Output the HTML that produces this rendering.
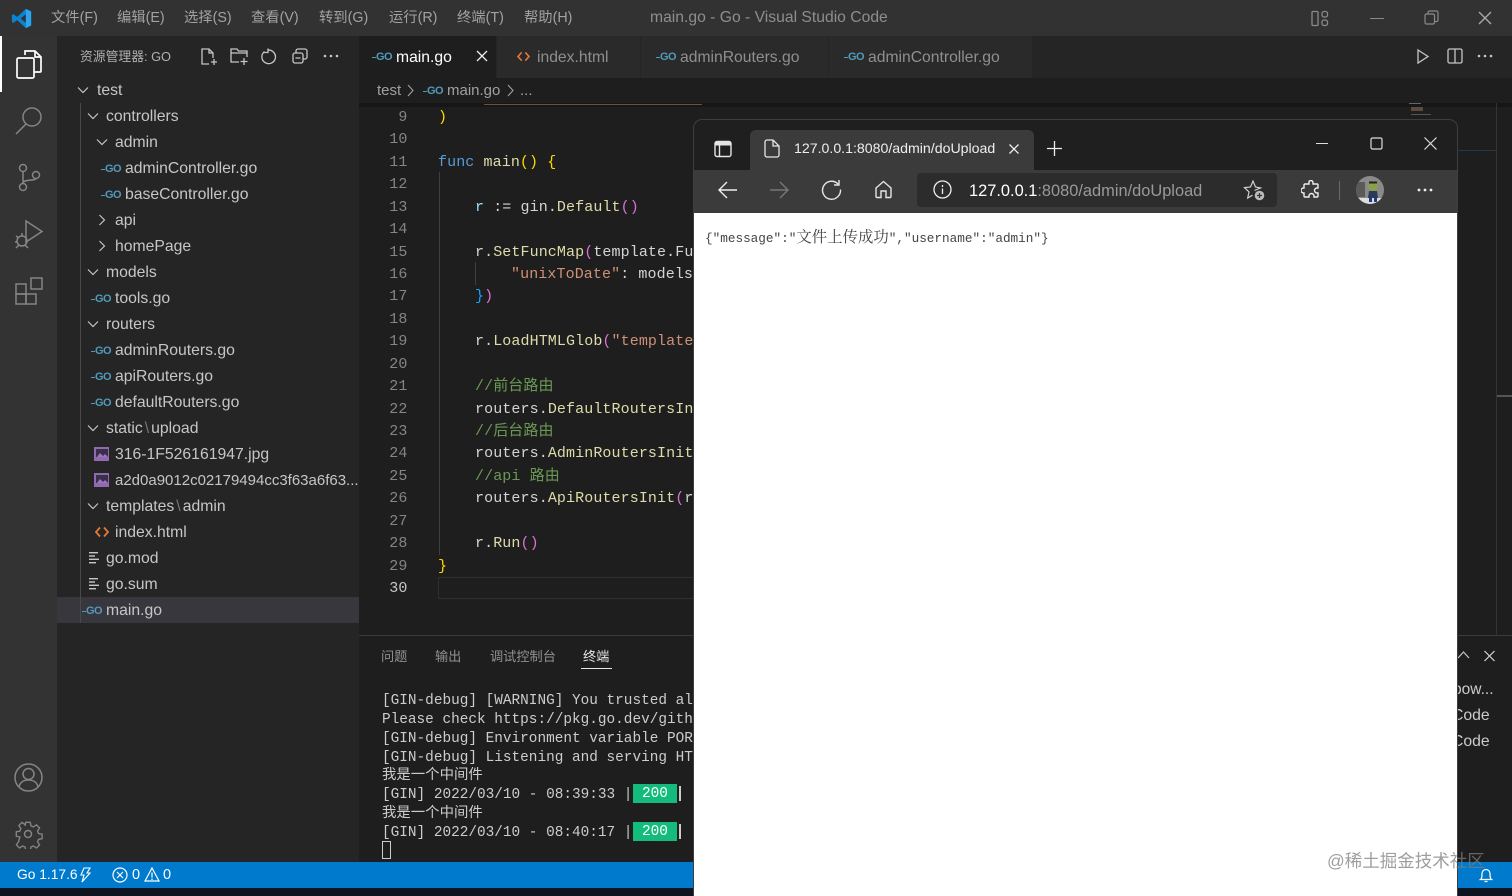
<!DOCTYPE html>
<html lang="zh"><head><meta charset="utf-8"><title>main.go - Go - Visual Studio Code</title>
<style>
html,body{margin:0;padding:0;width:1512px;height:896px;overflow:hidden;background:#1e1e1e}
body{font-family:"Liberation Sans","Noto Sans CJK SC",sans-serif;position:relative}
div,svg,span.a{position:absolute}
.t{position:absolute;white-space:nowrap;line-height:20px}
.m{color:#a2a2a2;font-size:14.3px;top:8px}
.f{color:#c6c6c6;font-size:15.75px;margin-top:1px}
.tab{color:#8f8f8f;font-size:15.7px;top:48px}
.c{position:absolute;margin-top:2px;white-space:nowrap;font:15px/22px "Liberation Mono","Noto Sans CJK SC",monospace;letter-spacing:.1px;color:#d4d4d4}
.n{position:absolute;margin-top:2px;left:370px;width:37.5px;text-align:right;font:15px/22px "Liberation Mono",monospace;color:#858585;letter-spacing:.1px}
.k{color:#569cd6}.y{color:#dcdcaa}.g{color:#ffd700}.v{color:#9cdcfe}.s{color:#ce9178}.z{color:#6a9955}.p{color:#da70d6}.b{color:#179fff}
.term{position:absolute;margin-top:2px;left:382px;white-space:nowrap;font:14.4px/19px "Liberation Mono","Noto Sans CJK SC",monospace;color:#ccc}
.go{position:absolute;font:bold 11px/12px "Liberation Sans",sans-serif;color:#519aba;letter-spacing:-.5px;white-space:nowrap}
.go:before{content:"";position:absolute;left:-4px;top:6px;width:4px;height:1px;background:#519aba}
.chev{fill:none;stroke:#c5c5c5;stroke-width:1.2}
.ic{fill:none;stroke:#c5c5c5;stroke-width:1.3}
.ab{fill:none;stroke:#858585;stroke-width:1.5}
</style></head><body>

<!-- backgrounds -->
<div style="left:0;top:0;width:1512px;height:36px;background:#323233"></div>
<div style="left:0;top:36px;width:57px;height:826px;background:#333"></div>
<div style="left:57px;top:36px;width:302px;height:826px;background:#252526"></div>
<div style="left:359px;top:36px;width:1153px;height:42px;background:#252526"></div>
<div style="left:359px;top:36px;width:137px;height:42px;background:#1e1e1e"></div>
<div style="left:497px;top:36px;width:143px;height:42px;background:#2a2a2a"></div>
<div style="left:641px;top:36px;width:187px;height:42px;background:#2a2a2a"></div>
<div style="left:829px;top:36px;width:203px;height:42px;background:#2a2a2a"></div>
<div style="left:359px;top:78px;width:1153px;height:25px;background:#1e1e1e"></div>
<div style="left:359px;top:103px;width:1153px;height:4px;background:#161616"></div>
<div style="left:484px;top:104px;width:218px;height:1px;background:#6b5140"></div>
<div style="left:359px;top:635px;width:1153px;height:1px;background:#3a3a3a"></div>
<div style="left:0;top:862px;width:1512px;height:26px;background:#007acc"></div>
<div style="left:0;top:888px;width:1512px;height:8px;background:#0e1420"></div>

<!-- title bar -->
<svg style="left:11px;top:8px" width="21" height="21" viewBox="0 0 24 24"><path fill="#0a84d0" d="M17 1l6 3v16l-6 3-10-9.2L2.700 17 1 16V8l1.700-1L7 10.200zM17 7l-6 5 6 5z"/><path fill="#2aa6f0" d="M17 1l6 3v16l-6 3z"/></svg>
<span class="t m" style="left:51px">文件(F)</span>
<span class="t m" style="left:117px">编辑(E)</span>
<span class="t m" style="left:184px">选择(S)</span>
<span class="t m" style="left:251px">查看(V)</span>
<span class="t m" style="left:319px">转到(G)</span>
<span class="t m" style="left:389px">运行(R)</span>
<span class="t m" style="left:457px">终端(T)</span>
<span class="t m" style="left:524px">帮助(H)</span>
<span class="t" style="left:650px;top:8px;font-size:15.7px;color:#8e8e8e">main.go - Go - Visual Studio Code</span>
<svg style="left:1311px;top:10px" width="18" height="17" class="ic" viewBox="0 0 18 17"><rect x="1" y="1.500" width="6" height="14" rx="1" stroke="#8a8a8a"/><rect x="11" y="1.500" width="5.500" height="5.500" rx="2" stroke="#8a8a8a"/><rect x="11" y="10" width="5.500" height="5.500" rx="2" stroke="#8a8a8a"/></svg>
<div style="left:1370px;top:18px;width:14px;height:1px;background:#8a8a8a"></div>
<svg style="left:1424px;top:10px" width="15" height="15" viewBox="0 0 15 15" fill="none" stroke="#8a8a8a" stroke-width="1.200"><rect x="1" y="4" width="9.500" height="10" rx="1.500"/><path d="M4 4V2.500A1.500 1.500 0 0 1 5.500 1H12.500A1.500 1.500 0 0 1 14 2.500V10A1.500 1.500 0 0 1 12.500 11.500H10.500"/></svg>
<svg style="left:1478px;top:11px" width="14" height="14" viewBox="0 0 14 14" stroke="#a8a8a8" stroke-width="1.400"><path d="M1 1l12 12M13 1L1 13"/></svg>

<!-- activity bar -->
<div style="left:0;top:36px;width:2px;height:56px;background:#fff"></div>
<svg style="left:15px;top:49px" width="27" height="30" viewBox="0 0 27 30" fill="none" stroke="#fff" stroke-width="1.700"><path d="M10 6V2h10l6 6v14a1 1 0 0 1-1 1h-6"/><path d="M20 2v6h6"/><rect x="2" y="9" width="17" height="20" rx="1.500"/></svg>
<svg style="left:15px;top:106px" width="28" height="29" class="ab" viewBox="0 0 28 29"><circle cx="17" cy="11" r="9"/><path d="M11 18L1 28"/></svg>
<svg style="left:17px;top:163px" width="24" height="29" class="ab" viewBox="0 0 24 29"><circle cx="6" cy="5" r="3.500"/><circle cx="6" cy="24" r="3.500"/><circle cx="19" cy="12" r="3.500"/><path d="M6 8.500v12M6 20c0-4 13-2 13-4.500"/></svg>
<svg style="left:14px;top:218px" width="30" height="31" class="ab" viewBox="0 0 30 31"><path d="M12 3l16 10.500L12 24z"/><circle cx="8" cy="23" r="5"/><path d="M2 18l3 2M1 24h2M2 30l3-3M14 30l-3-3M8 18v-3"/></svg>
<svg style="left:14px;top:276px" width="30" height="30" class="ab" viewBox="0 0 30 30"><rect x="2" y="8" width="10" height="10"/><rect x="2" y="18" width="10" height="10"/><rect x="12" y="18" width="10" height="10"/><rect x="17" y="2" width="11" height="11"/></svg>
<svg style="left:14px;top:763px" width="29" height="29" class="ab" viewBox="0 0 29 29"><circle cx="14.500" cy="14.500" r="13.500"/><circle cx="14.500" cy="11" r="5.500"/><path d="M5 24c1-5 5-7 9.500-7s8.500 2 9.500 7"/></svg>
<svg style="left:13px;top:819px" width="30" height="30" class="ab" viewBox="0 0 30 30"><circle cx="15" cy="15" r="3.500"/><path d="M12.500 2h5l.8 4 2.700 1.100 3.400-2.300 3.500 3.500-2.300 3.400 1.100 2.800 4 .7v5l-4 .8-1.100 2.700 2.300 3.400-3.500 3.500-3.400-2.300-2.700 1.100-.8 4h-5l-.8-4-2.700-1.100-3.400 2.300-3.500-3.500 2.300-3.400L6 18.300l-4-.8v-5l4-.7 1.100-2.800-2.300-3.400 3.500-3.500 3.400 2.300L11.700 6z" transform="translate(1.500 1.500) scale(.9)"/></svg>

<!-- sidebar header -->
<span class="t" style="left:80px;top:47px;font-size:12.800px;color:#b0b0b0">资源管理器: GO</span>
<svg style="left:200px;top:48px" width="18" height="18" class="ic" viewBox="0 0 18 18"><path d="M9 16H2V1h7l4 4v5M9 1v4h4M14 11v6M11 14h6"/></svg>
<svg style="left:230px;top:47px" width="19" height="19" class="ic" viewBox="0 0 19 19"><path d="M9 15H1V2h6l1.500 2H17v6M1 6h16M14 11v7M10.500 14.500h7"/></svg>
<svg style="left:261px;top:48px" width="17" height="17" class="ic" viewBox="0 0 17 17"><path d="M3.500 3.500a6.800 6.800 0 1 0 3.500-1.400M7 .5v4H3"/></svg>
<svg style="left:292px;top:48px" width="16" height="16" class="ic" viewBox="0 0 16 16"><rect x="1" y="5" width="10" height="10" rx="2"/><path d="M4 5V3a2 2 0 0 1 2-2h7a2 2 0 0 1 2 2v6a2 2 0 0 1-2 2h-2M3.500 10h5"/></svg>
<svg style="left:323px;top:54px" width="16" height="4" viewBox="0 0 16 4" fill="#c5c5c5"><circle cx="2" cy="2" r="1.300"/><circle cx="8" cy="2" r="1.300"/><circle cx="14" cy="2" r="1.300"/></svg>

<!-- tree -->
<div style="left:57px;top:597px;width:302px;height:26px;background:#37373d"></div>
<div style="left:80px;top:103px;width:1px;height:520px;background:#4a4a4a"></div>
<svg style="left:76px;top:83px" width="14" height="14" class="chev" viewBox="0 0 14 14"><path d="M2 4.500l5 5 5-5"/></svg>
<svg style="left:86px;top:109px" width="14" height="14" class="chev" viewBox="0 0 14 14"><path d="M2 4.500l5 5 5-5"/></svg>
<svg style="left:95px;top:135px" width="14" height="14" class="chev" viewBox="0 0 14 14"><path d="M2 4.500l5 5 5-5"/></svg>
<svg style="left:95px;top:213px" width="14" height="14" class="chev" viewBox="0 0 14 14"><path d="M4.500 2l5 5-5 5"/></svg>
<svg style="left:95px;top:239px" width="14" height="14" class="chev" viewBox="0 0 14 14"><path d="M4.500 2l5 5-5 5"/></svg>
<svg style="left:86px;top:265px" width="14" height="14" class="chev" viewBox="0 0 14 14"><path d="M2 4.500l5 5 5-5"/></svg>
<svg style="left:86px;top:317px" width="14" height="14" class="chev" viewBox="0 0 14 14"><path d="M2 4.500l5 5 5-5"/></svg>
<svg style="left:86px;top:421px" width="14" height="14" class="chev" viewBox="0 0 14 14"><path d="M2 4.500l5 5 5-5"/></svg>
<svg style="left:86px;top:499px" width="14" height="14" class="chev" viewBox="0 0 14 14"><path d="M2 4.500l5 5 5-5"/></svg>

<span class="t f" style="left:97px;top:80px">test</span>
<span class="t f" style="left:106px;top:106px">controllers</span>
<span class="t f" style="left:115px;top:132px">admin</span>
<span class="go" style="left:105px;top:163px">GO</span><span class="t f" style="left:125px;top:158px">adminController.go</span>
<span class="go" style="left:105px;top:189px">GO</span><span class="t f" style="left:125px;top:184px">baseController.go</span>
<span class="t f" style="left:115px;top:210px">api</span>
<span class="t f" style="left:115px;top:236px">homePage</span>
<span class="t f" style="left:106px;top:262px">models</span>
<span class="go" style="left:95px;top:293px">GO</span><span class="t f" style="left:115px;top:288px">tools.go</span>
<span class="t f" style="left:106px;top:314px">routers</span>
<span class="go" style="left:95px;top:345px">GO</span><span class="t f" style="left:115px;top:340px">adminRouters.go</span>
<span class="go" style="left:95px;top:371px">GO</span><span class="t f" style="left:115px;top:366px">apiRouters.go</span>
<span class="go" style="left:95px;top:397px">GO</span><span class="t f" style="left:115px;top:392px">defaultRouters.go</span>
<span class="t f" style="left:106px;top:418px">static<span style="color:#777;margin:0 2px">\</span>upload</span>
<svg style="left:94px;top:447px" width="15" height="14" viewBox="0 0 15 14"><rect width="15" height="14" fill="#8f6ab0"/><rect x="2" y="2" width="12" height="8" fill="#3a2f48"/><path d="M3 10l3-4 3 3 2-2 3 3z" fill="#a074c4"/></svg>
<span class="t f" style="left:115px;top:444px">316-1F526161947.jpg</span>
<svg style="left:94px;top:473px" width="15" height="14" viewBox="0 0 15 14"><rect width="15" height="14" fill="#8f6ab0"/><rect x="2" y="2" width="12" height="8" fill="#3a2f48"/><path d="M3 10l3-4 3 3 2-2 3 3z" fill="#a074c4"/></svg>
<span class="t f" style="left:115px;top:470px;font-size:15px">a2d0a9012c02179494cc3f63a6f63...</span>
<span class="t f" style="left:106px;top:496px">templates<span style="color:#777;margin:0 2px">\</span>admin</span>
<svg style="left:95px;top:526px" width="14" height="12" viewBox="0 0 14 12" fill="none" stroke="#e37933" stroke-width="1.800"><path d="M5 1.500L1 6l4 4.500M9 1.500L13 6l-4 4.500"/></svg>
<span class="t f" style="left:115px;top:522px">index.html</span>
<svg style="left:89px;top:552px" width="11" height="12" viewBox="0 0 11 12" fill="#c5c5c5"><rect width="9" height="1.400"/><rect y="3.300" width="6" height="1.400"/><rect y="6.600" width="10" height="1.400"/><rect y="10" width="7" height="1.400"/></svg>
<span class="t f" style="left:106px;top:548px">go.mod</span>
<svg style="left:89px;top:578px" width="11" height="12" viewBox="0 0 11 12" fill="#c5c5c5"><rect width="9" height="1.400"/><rect y="3.300" width="6" height="1.400"/><rect y="6.600" width="10" height="1.400"/><rect y="10" width="7" height="1.400"/></svg>
<span class="t f" style="left:106px;top:574px">go.sum</span>
<span class="go" style="left:86px;top:605px">GO</span><span class="t f" style="left:106px;top:600px">main.go</span>

<!-- tabs -->
<span class="go" style="left:376px;top:51px">GO</span><span class="t tab" style="left:396px;color:#fff">main.go</span>
<svg style="left:476px;top:50px" width="12" height="12" viewBox="0 0 12 12" stroke="#eee" stroke-width="1.300"><path d="M1 1l10 10M11 1L1 11"/></svg>
<svg style="left:517px;top:51px" width="13" height="11" viewBox="0 0 14 12" fill="none" stroke="#e37933" stroke-width="1.800"><path d="M5 1.500L1 6l4 4.500M9 1.500L13 6l-4 4.500"/></svg>
<span class="t tab" style="left:537px">index.html</span>
<span class="go" style="left:660px;top:51px">GO</span><span class="t tab" style="left:680px">adminRouters.go</span>
<span class="go" style="left:848px;top:51px">GO</span><span class="t tab" style="left:868px">adminController.go</span>
<svg style="left:1416px;top:48px" width="14" height="17" viewBox="0 0 14 17" fill="none" stroke="#c5c5c5" stroke-width="1.300"><path d="M2 2l10 6.500L2 15z"/></svg>
<svg style="left:1447px;top:48px" width="16" height="16" viewBox="0 0 16 16" fill="none" stroke="#c5c5c5" stroke-width="1.300"><rect x="1" y="1" width="14" height="14" rx="1.500"/><path d="M8 1v14"/></svg>
<svg style="left:1477px;top:54px" width="16" height="4" viewBox="0 0 16 4" fill="#c5c5c5"><circle cx="2" cy="2" r="1.300"/><circle cx="8" cy="2" r="1.300"/><circle cx="14" cy="2" r="1.300"/></svg>

<!-- breadcrumbs -->
<span class="t" style="left:377px;top:81px;font-size:15px;color:#a0a0a0">test</span>
<svg style="left:406px;top:84px" width="9" height="13" viewBox="0 0 9 13" fill="none" stroke="#a0a0a0" stroke-width="1.100"><path d="M2 1l5 5.500-5 5.500"/></svg>
<span class="go" style="left:427px;top:85px">GO</span>
<span class="t" style="left:447px;top:81px;font-size:15px;color:#a0a0a0">main.go</span>
<svg style="left:506px;top:84px" width="9" height="13" viewBox="0 0 9 13" fill="none" stroke="#a0a0a0" stroke-width="1.100"><path d="M2 1l5 5.500-5 5.500"/></svg>
<span class="t" style="left:520px;top:81px;font-size:15px;color:#a0a0a0">...</span>

<!-- code -->
<div style="left:439px;top:172px;width:1px;height:383px;background:#404040"></div>
<div style="left:475px;top:262px;width:1px;height:23px;background:#404040"></div>
<div style="left:438px;top:577px;width:256px;height:20px;border:1px solid #303030;border-right:0"></div>
<span class="n" style="top:105px">9</span><span class="n" style="top:127.400px">10</span><span class="n" style="top:149.900px">11</span><span class="n" style="top:172.300px">12</span><span class="n" style="top:194.700px">13</span><span class="n" style="top:217.200px">14</span><span class="n" style="top:239.600px">15</span><span class="n" style="top:262px">16</span><span class="n" style="top:284.400px">17</span><span class="n" style="top:306.900px">18</span><span class="n" style="top:329.300px">19</span><span class="n" style="top:351.700px">20</span><span class="n" style="top:374.200px">21</span><span class="n" style="top:396.600px">22</span><span class="n" style="top:419px">23</span><span class="n" style="top:441.400px">24</span><span class="n" style="top:463.900px">25</span><span class="n" style="top:486.300px">26</span><span class="n" style="top:508.700px">27</span><span class="n" style="top:531.200px">28</span><span class="n" style="top:553.600px">29</span><span class="n" style="top:576px;color:#c6c6c6">30</span>
<span class="c g" style="left:438px;top:105px">)</span>
<span class="c" style="left:438px;top:149.900px"><span class="k">func</span> <span class="y">main</span><span class="g">()</span> <span class="g">{</span></span>
<span class="c" style="left:475px;top:194.700px"><span class="v">r</span> := gin.<span class="y">Default</span><span class="p">()</span></span>
<span class="c" style="left:475px;top:239.600px">r.<span class="y">SetFuncMap</span><span class="p">(</span>template.Fu</span>
<span class="c" style="left:511px;top:262px"><span class="s">"unixToDate"</span>: models</span>
<span class="c" style="left:475px;top:284.400px"><span class="b">}</span><span class="p">)</span></span>
<span class="c" style="left:475px;top:329.300px">r.<span class="y">LoadHTMLGlob</span><span class="p">(</span><span class="s">"template</span></span>
<span class="c z" style="left:475px;top:374.200px">//前台路由</span>
<span class="c" style="left:475px;top:396.600px">routers.<span class="y">DefaultRoutersIn</span></span>
<span class="c z" style="left:475px;top:419px">//后台路由</span>
<span class="c" style="left:475px;top:441.400px">routers.<span class="y">AdminRoutersInit</span></span>
<span class="c z" style="left:475px;top:463.900px">//api 路由</span>
<span class="c" style="left:475px;top:486.300px">routers.<span class="y">ApiRoutersInit</span><span class="p">(</span>r</span>
<span class="c" style="left:475px;top:531.200px">r.<span class="y">Run</span><span class="p">()</span></span>
<span class="c g" style="left:438px;top:553.600px">}</span>

<!-- minimap / right -->
<div style="left:1409px;top:103px;width:12px;height:1px;background:#666"></div>
<div style="left:1411px;top:107px;width:12px;height:4px;background:#5a4a40"></div>
<div style="left:1411px;top:114px;width:20px;height:1px;background:#555"></div>
<div style="left:1496px;top:103px;width:1px;height:532px;background:#333"></div>
<div style="left:1457px;top:150px;width:39px;height:1px;background:#26384a"></div>
<div style="left:1497px;top:395px;width:15px;height:2px;background:#555"></div>

<!-- panel -->
<span class="t" style="left:381px;top:647px;font-size:13.200px;color:#909090">问题</span>
<span class="t" style="left:435px;top:647px;font-size:13.200px;color:#909090">输出</span>
<span class="t" style="left:490px;top:647px;font-size:13.200px;color:#909090">调试控制台</span>
<span class="t" style="left:583px;top:647px;font-size:13.200px;color:#e7e7e7">终端</span>
<div style="left:581px;top:668px;width:31px;height:1px;background:#e7e7e7"></div>
<span class="term" style="top:690px">[GIN-debug] [WARNING] You trusted al</span>
<span class="term" style="top:709px">Please check https://pkg.go.dev/gith</span>
<span class="term" style="top:728px">[GIN-debug] Environment variable POR</span>
<span class="term" style="top:747px">[GIN-debug] Listening and serving HT</span>
<span class="term" style="top:765px">我是一个中间件</span>
<span class="term" style="top:784px">[GIN] 2022/03/10 - 08:39:33 |</span>
<div style="left:633px;top:784px;width:44px;height:19px;background:#13bc7c;color:#fff;font:14.4px/21px 'Liberation Mono',monospace;text-align:center">200</div>
<div style="left:679px;top:786px;width:2px;height:15px;background:#ccc"></div>
<span class="term" style="top:803px">我是一个中间件</span>
<span class="term" style="top:822px">[GIN] 2022/03/10 - 08:40:17 |</span>
<div style="left:633px;top:822px;width:44px;height:19px;background:#13bc7c;color:#fff;font:14.4px/21px 'Liberation Mono',monospace;text-align:center">200</div>
<div style="left:679px;top:824px;width:2px;height:15px;background:#ccc"></div>
<div style="left:382px;top:841px;width:7px;height:16px;border:1px solid #ccc"></div>
<svg style="left:1457px;top:650px" width="13" height="10" viewBox="0 0 13 10" fill="none" stroke="#c5c5c5" stroke-width="1.200"><path d="M1 8l5.500-6 5.500 6"/></svg>
<svg style="left:1484px;top:650px" width="11" height="12" viewBox="0 0 11 12" stroke="#d5d5d5" stroke-width="1.200"><path d="M.5 1l10 10M10.500 1L.5 11"/></svg>
<span class="t f" style="left:1453px;top:679px;font-size:15.500px;color:#ccc">pow...</span>
<span class="t f" style="left:1452px;top:705px;color:#ccc">Code</span>
<span class="t f" style="left:1452px;top:731px;color:#ccc">Code</span>

<!-- status bar -->
<span class="t" style="left:17px;top:865px;font-size:13.800px;color:#fff">Go 1.17.6</span>
<svg style="left:80px;top:867px" width="11" height="16" viewBox="0 0 11 16" fill="none" stroke="#fff" stroke-width="1.100"><path d="M4 1h6L7 6h3L2 15l2-7H1z"/></svg>
<svg style="left:112px;top:867px" width="16" height="16" viewBox="0 0 16 16" fill="none" stroke="#fff" stroke-width="1.200"><circle cx="8" cy="8" r="7"/><path d="M5 5l6 6M11 5l-6 6"/></svg>
<span class="t" style="left:132px;top:865px;font-size:14.500px;color:#fff">0</span>
<svg style="left:144px;top:867px" width="16" height="15" viewBox="0 0 16 15" fill="none" stroke="#fff" stroke-width="1.200"><path d="M8 1l7 13H1zM8 5.500v5M8 11.500v1.500"/></svg>
<span class="t" style="left:163px;top:865px;font-size:14.500px;color:#fff">0</span>
<svg style="left:1479px;top:867px" width="14" height="16" viewBox="0 0 14 16" fill="none" stroke="#fff" stroke-width="1.200"><path d="M1.500 12.500c1.500-1 1.500-3 1.500-6a4 4 0 0 1 8 0c0 3 0 5 1.500 6zM5.500 14.500h3"/></svg>

<!-- browser -->
<div style="left:694px;top:120px;width:763px;height:776px;background:#1f1f1f;border-radius:8px 8px 0 0;box-shadow:0 0 0 1px #3e3e3e;overflow:hidden">
 <div style="left:0;top:50px;width:763px;height:43px;background:#3b3b3b"></div>
 <div style="left:56px;top:10px;width:284px;height:42px;background:#3b3b3b;border-radius:6px 6px 0 0"></div>
 <div style="left:223px;top:53px;width:360px;height:34px;background:#2c2c2c;border-radius:4px"></div>
 <div style="left:0;top:93px;width:763px;height:683px;background:#fff"></div>
</div>
<svg style="left:714px;top:140px" width="18" height="18" viewBox="0 0 18 18" fill="none" stroke="#e5e5e5" stroke-width="1.400"><rect x="1" y="1.500" width="16" height="15" rx="2"/><path d="M5.500 5v11.500"/><path d="M1 2h16v3.500H1z" fill="#e5e5e5" stroke="none"/></svg>
<svg style="left:764px;top:139px" width="16" height="19" viewBox="0 0 16 19" fill="none" stroke="#e5e5e5" stroke-width="1.300"><path d="M1 3a2 2 0 0 1 2-2h6l6 6v9a2 2 0 0 1-2 2H3a2 2 0 0 1-2-2zM9 1v6h6"/></svg>
<span class="t" style="left:794px;top:138px;font-size:14.150px;color:#eee">127.0.0.1:8080/admin/doUpload</span>
<svg style="left:1008px;top:143px" width="12" height="12" viewBox="0 0 12 12" stroke="#eee" stroke-width="1.300"><path d="M1.500 1.500l9 9M10.500 1.500l-9 9"/></svg>
<svg style="left:1046px;top:140px" width="17" height="17" viewBox="0 0 17 17" stroke="#eee" stroke-width="1.300"><path d="M8.500 1v15M1 8.500h15"/></svg>
<div style="left:1316px;top:143px;width:12px;height:1px;background:#ddd"></div>
<svg style="left:1370px;top:137px" width="13" height="13" viewBox="0 0 13 13" fill="none" stroke="#ddd" stroke-width="1.200"><rect x="1" y="1" width="11" height="11" rx="1.500"/></svg>
<svg style="left:1424px;top:137px" width="13" height="13" viewBox="0 0 13 13" stroke="#ddd" stroke-width="1.200"><path d="M.5.500l12 12M12.500.5l-12 12"/></svg>
<svg style="left:717px;top:180px" width="21" height="20" viewBox="0 0 21 20" fill="none" stroke="#eee" stroke-width="1.400"><path d="M10 2l-8 8 8 8M2 10h18"/></svg>
<svg style="left:769px;top:180px" width="21" height="20" viewBox="0 0 21 20" fill="none" stroke="#777" stroke-width="1.400"><path d="M11 2l8 8-8 8M19 10H1"/></svg>
<svg style="left:821px;top:179px" width="21" height="21" viewBox="0 0 21 21" fill="none" stroke="#e5e5e5" stroke-width="1.400"><path d="M17 5a9 9 0 1 0 2.500 5.500M18 1v5h-5"/></svg>
<svg style="left:874px;top:180px" width="19" height="19" viewBox="0 0 19 19" fill="none" stroke="#e5e5e5" stroke-width="1.400"><path d="M2 8l7.500-6.500L17 8v8.500a1 1 0 0 1-1 1h-4V11H7v6.500H3a1 1 0 0 1-1-1z"/></svg>
<svg style="left:933px;top:180px" width="19" height="19" viewBox="0 0 19 19" fill="none" stroke="#eee" stroke-width="1.300"><circle cx="9.500" cy="9.500" r="8.500"/><path d="M9.500 8.500v5.500M9.500 5v2"/></svg>
<span class="t" style="left:969px;top:181px;font-size:16.400px;color:#fff">127.0.0.1<span style="color:#999">:8080/admin/doUpload</span></span>
<svg style="left:1243px;top:180px" width="23" height="21" viewBox="0 0 23 21" fill="none" stroke="#cfcfcf" stroke-width="1.200"><path d="M11.500 10.500L17.500 8l-5-1L10 1 7.500 7l-6 .6L6 12l-1.300 6 4.800-2.800"/><circle cx="16.500" cy="15.500" r="4.800" fill="#bbb" stroke="none"/><path d="M16.500 13v5M14 15.500h5" stroke="#333"/></svg>
<svg style="left:1301px;top:180px" width="20" height="20" viewBox="0 0 20 20" fill="none" stroke="#eee" stroke-width="1.400"><path d="M8 1.500a2.200 2.200 0 0 1 4 1.500v1h4a1 1 0 0 1 1 1v3h-1a2.200 2.200 0 1 0 0 5h1v3a1 1 0 0 1-1 1h-3v-1a2.200 2.200 0 1 0-5 0v1H4a1 1 0 0 1-1-1v-3h-.5a2.500 2.500 0 0 1 0-5H3V5a1 1 0 0 1 1-1h4z"/></svg>
<div style="left:1339px;top:181px;width:1px;height:19px;background:#6a6a6a"></div>
<svg style="left:1356px;top:176px" width="28" height="28" viewBox="0 0 28 28"><defs><clipPath id="av"><circle cx="14" cy="14" r="14"/></clipPath></defs><g clip-path="url(#av)"><rect width="28" height="28" fill="#8a8a8a"/><rect y="22" width="28" height="6" fill="#ddd"/><rect x="0" y="6" width="9" height="15" fill="#5a5a5a"/><circle cx="17" cy="10" r="5" fill="#8aa04a"/><path d="M13 5.500h8v2h-8z" fill="#222"/><path d="M13 15h8l1 7h-10z" fill="#2b3a55"/><rect x="13" y="21" width="3" height="5" fill="#1d3c7a"/><rect x="18" y="21" width="3" height="5" fill="#1d3c7a"/></g></svg>
<svg style="left:1417px;top:188px" width="16" height="4" viewBox="0 0 16 4" fill="#eee"><circle cx="2" cy="2" r="1.400"/><circle cx="8" cy="2" r="1.400"/><circle cx="14" cy="2" r="1.400"/></svg>
<span class="t" style="left:705px;top:226px;font:12.700px/20px 'Liberation Mono','Noto Serif CJK SC',monospace;color:#444">{"message":"<span style="font-size:15.400px;font-family:'Noto Serif CJK SC',serif">文件上传成功</span>","username":"admin"}</span>

<!-- watermark -->
<span class="t" style="left:1327px;top:851px;font-size:17.500px;color:rgba(125,125,125,.75)">@稀土掘金技术社区</span>
</body></html>
